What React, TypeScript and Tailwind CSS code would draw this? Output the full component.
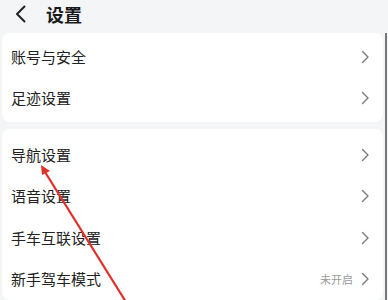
import React from "react";

const Chevron = () => (
  <svg width="9" height="14" viewBox="0 0 9 14" className="shrink-0">
    <path d="M1.5 1.5 L7 7 L1.5 12.5" fill="none" stroke="#7a7a7a" strokeWidth="1.4" strokeLinecap="round" strokeLinejoin="round" />
  </svg>
);

const Row = ({ label, value }: { label: string; value?: string }) => (
  <div className="flex h-[41.5px] items-center justify-between pl-[9px] pr-[13px]">
    <span className="text-[15px] text-[#222]">{label}</span>
    <div className="flex items-center gap-[8px]">
      {value && <span className="text-[11px] text-[#9a9a9a]">{value}</span>}
      <Chevron />
    </div>
  </div>
);

export default function App() {
  return (
    <div
      className="relative h-[300px] w-[388px] overflow-hidden bg-[#f4f5f7]"
      style={{ fontFamily: '"Noto Sans CJK SC", "Noto Sans", sans-serif' }}
    >
      <div className="flex h-[33px] items-start pl-[14px] pt-[4px]">
        <svg width="14" height="18" viewBox="0 0 14 18" className="mt-[1px]">
          <path d="M10.5 1.5 L3 9 L10.5 16.5" fill="none" stroke="#222" strokeWidth="2" strokeLinecap="round" strokeLinejoin="round" />
        </svg>
        <span className="ml-[18px] text-[18px] font-bold leading-[20px] text-[#1a1a1a]">设置</span>
      </div>
      <div className="ml-[2px] mr-[5px] rounded-[8px] bg-white py-[3px]">
        <Row label="账号与安全" />
        <Row label="足迹设置" />
      </div>
      <div className="ml-[2px] mr-[5px] mt-[7px] rounded-[8px] bg-white pt-[5px]">
        <Row label="导航设置" />
        <Row label="语音设置" />
        <Row label="手车互联设置" />
        <Row label="新手驾车模式" value="未开启" />
      </div>
      <div className="absolute right-[1px] top-[33px] h-[267px] w-[2px] bg-[#777]" />
      <svg className="absolute left-0 top-0" width="388" height="300" viewBox="0 0 388 300">
        <line x1="45" y1="172" x2="126" y2="302" stroke="#e0302a" strokeWidth="2.2" />
        <polygon points="41,165 50,171 42,175" fill="#e0302a" />
      </svg>
    </div>
  );
}
